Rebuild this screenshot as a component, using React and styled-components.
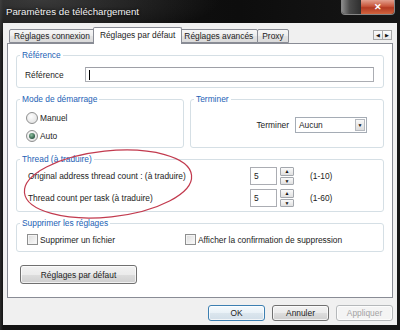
import React from 'react'
import styled, { createGlobalStyle } from 'styled-components'

const GlobalStyle = createGlobalStyle`
  html, body {
    margin: 0;
    padding: 0;
    background: #fff;
  }
  body {
    font-family: "Liberation Sans", Arial, sans-serif;
    font-size: 8.4px;
    color: #1c1c1c;
  }
`;

const Window = styled.div`
  position: relative;
  width: 400px;
  height: 330px;
  display: flex;
  flex-direction: column;
  overflow: hidden;
  background:
    radial-gradient(ellipse 180px 40px at 40px 0, rgba(90,90,90,.55), rgba(0,0,0,0)),
    linear-gradient(90deg, #2a2a2a 0, #131313 3px, #0d0d0d 60%, #161616 100%);
`;

const TitleBar = styled.div`
  height: 23px;
  flex-shrink: 0;
  display: flex;
  align-items: flex-start;
  padding: 0 5px 0 6px;
`;

const Title = styled.div`
  color: #f2f2f2;
  font-size: 9.7px;
  line-height: 24px;
  text-shadow: 0 0 3px #000;
`;

const Caption = styled.div`
  margin-left: auto;
  display: flex;
  height: 14px;
  border: 1px solid rgba(230,230,230,.55);
  border-top: none;
  border-radius: 0 0 4px 4px;
  overflow: hidden;
`;

const CaptionPart = styled.div`
  width: ${p => p.$w}px;
  height: 100%;
  display: flex;
  align-items: center;
  justify-content: center;
  color: #fff;
  font-size: 9px;
  font-weight: bold;
  background: ${p => p.$red
    ? 'linear-gradient(#e2a08e 0%, #c8553a 45%, #b23a22 55%, #d2643e 100%)'
    : 'linear-gradient(90deg, #8a8a8a 0%, #4a4a4a 40%, #2e2e2e 100%)'};
`;

const Client = styled.div`
  flex: 1;
  margin: 0 3px 5px 3px;
  padding: 0 4px 4px 4px;
  display: flex;
  flex-direction: column;
  background: #f0f0f0;
`;

const TabStrip = styled.div`
  height: 16px;
  margin-top: 4px;
  padding-left: 3px;
  display: flex;
  align-items: flex-end;
`;

const Tab = styled.div`
  position: relative;
  z-index: ${p => (p.$active ? 2 : 1)};
  height: ${p => (p.$active ? 17 : 14)}px;
  margin: 0 ${p => (p.$active ? -2 : 0)}px ${p => (p.$active ? -1 : 0)}px;
  margin-left: ${p => (p.$active ? -2 : -1)}px;
  padding: 0 ${p => (p.$active ? 6 : 4)}px;
  box-sizing: border-box;
  border: 1px solid #898c95;
  border-bottom: ${p => (p.$active ? 'none' : '1px solid #898c95')};
  border-radius: 2px 2px 0 0;
  background: ${p => (p.$active
    ? '#fff'
    : 'linear-gradient(#f6f6f6 0%, #eeeeee 45%, #e2e2e2 55%, #dadada 100%)')};
  line-height: ${p => (p.$active ? 14 : 13)}px;
  white-space: nowrap;
  color: #1c1c1c;
`;

const TabScroll = styled.div`
  margin-left: auto;
  margin-bottom: 3px;
  margin-right: 1px;
  display: flex;
`;

const ScrollBtn = styled.div`
  width: 10px;
  height: 10px;
  box-sizing: border-box;
  border: 1px solid #a8a8a8;
  margin-left: -1px;
  background: linear-gradient(#fbfbfb, #e8e8e8);
  display: flex;
  align-items: center;
  justify-content: center;
  font-size: 5px;
  color: #111;
`;

const Panel = styled.div`
  flex: 1;
  display: flex;
  flex-direction: column;
  padding: 6px 8px 0 8px;
  border: 1px solid #898c95;
  background: #fff;
`;

const Group = styled.fieldset`
  margin: 0;
  padding: 0;
  min-width: 0;
  border: 1px solid #d5dfe5;
  border-radius: 3px;
  margin-top: ${p => p.$top || 0}px;
  flex: ${p => (p.$grow ? 1 : 'none')};
  width: ${p => (p.$w ? `${p.$w}px` : 'auto')};
  box-sizing: border-box;
  display: flex;
  flex-direction: column;
`;

const Legend = styled.legend`
  margin-left: 3px;
  padding: 0 2px;
  color: #2362b5;
  font-size: 8.4px;
  line-height: 10px;
`;

const GroupBody = styled.div`
  flex: 1;
  display: flex;
  flex-direction: ${p => p.$dir || 'row'};
  align-items: ${p => p.$align || 'center'};
  justify-content: ${p => p.$justify || 'flex-start'};
  gap: ${p => p.$gap || 0}px;
  padding: ${p => p.$pad};
`;

const GroupRow = styled.div`
  display: flex;
  gap: 6px;
  margin-top: 6px;
`;

const Label = styled.span`
  width: ${p => (p.$w ? `${p.$w}px` : 'auto')};
  flex-shrink: 0;
  white-space: nowrap;
  line-height: 12px;
`;

const TextInput = styled.div`
  flex: 1;
  height: 15px;
  box-sizing: border-box;
  border: 1px solid #abadb3;
  border-top-color: #9ea0a7;
  display: flex;
  align-items: center;
  padding-left: 3px;
`;

const Caret = styled.span`
  width: 1px;
  height: 10px;
  background: #000;
`;

const Option = styled.label`
  display: flex;
  align-items: center;
  gap: 2px;
  height: ${p => p.$h || 14}px;
  white-space: nowrap;
`;

const Radio = styled.span`
  width: 12px;
  height: 12px;
  box-sizing: border-box;
  border-radius: 50%;
  border: 1px solid #8e8f8f;
  background: radial-gradient(circle at 40% 35%, #fdfdfd, #dcdcdc);
  display: flex;
  align-items: center;
  justify-content: center;
  &::after {
    content: '';
    width: 6px;
    height: 6px;
    border-radius: 50%;
    display: ${p => (p.$checked ? 'block' : 'none')};
    background: radial-gradient(circle at 40% 35%, #8fc0a0, #2c5a44 70%);
  }
`;

const Check = styled.span`
  width: 11px;
  height: 11px;
  box-sizing: border-box;
  border: 1px solid #8e8f8f;
  background: linear-gradient(135deg, #dcdcdc, #fbfbfb);
  box-shadow: inset 0 0 0 1px #f4f4f4;
`;

const Select = styled.div`
  width: 72px;
  height: 16px;
  box-sizing: border-box;
  border: 1px solid #a5acb5;
  background: #fff;
  display: flex;
  align-items: center;
  padding: 0 1px 0 3px;
`;

const SelectText = styled.span`
  flex: 1;
`;

const DropBtn = styled.span`
  width: 10px;
  height: 12px;
  box-sizing: border-box;
  border: 1px solid #b5b9bf;
  background: linear-gradient(#f8f8f8, #dcdcdc);
  display: flex;
  align-items: center;
  justify-content: center;
  font-size: 5px;
  color: #111;
`;

const ThreadRow = styled.div`
  display: flex;
  align-items: center;
  height: 18px;
`;

const SpinBox = styled.div`
  display: flex;
  gap: 3px;
  height: 18px;
`;

const SpinInput = styled.div`
  width: 27px;
  box-sizing: border-box;
  border: 1px solid #abadb3;
  padding-left: 3px;
  line-height: 16px;
`;

const SpinButtons = styled.div`
  width: 14px;
  display: flex;
  flex-direction: column;
  gap: 1px;
`;

const SpinBtn = styled.div`
  flex: 1;
  box-sizing: border-box;
  border: 1px solid #a3a7ad;
  border-radius: 1px;
  background: linear-gradient(#fafafa, #e0e0e0);
  display: flex;
  align-items: center;
  justify-content: center;
  font-size: 5px;
  color: #111;
`;

const Range = styled.span`
  margin-left: 16px;
`;

const Button = styled.div`
  width: ${p => p.$w}px;
  height: ${p => p.$h || 16}px;
  box-sizing: border-box;
  border: 1px solid ${p => (p.$default ? '#3c7fb1' : p.$disabled ? '#b5b8ba' : '#707070')};
  border-radius: 3px;
  background: ${p => (p.$disabled
    ? '#f4f4f4'
    : p.$default
      ? 'linear-gradient(#f5fafd 0%, #e9f1f7 50%, #dbe6ee 51%, #d2dee8 100%)'
      : 'linear-gradient(#f2f2f2 0%, #ebebeb 50%, #dddddd 51%, #cfcfcf 100%)')};
  box-shadow: inset 0 0 0 1px rgba(255,255,255,.7);
  color: ${p => (p.$disabled ? '#a3a3a3' : '#1c1c1c')};
  display: flex;
  align-items: center;
  justify-content: center;
  white-space: nowrap;
`;

const DefaultsButton = styled(Button)`
  margin: 13px 0 0 4px;
`;

const Footer = styled.div`
  display: flex;
  justify-content: flex-end;
  gap: 7px;
  margin-top: 7px;
`;

const Annotation = styled.svg`
  position: absolute;
  left: 0;
  top: 0;
  pointer-events: none;
`;

const App = () => {
  return (
    <Window>
      <GlobalStyle />
      <TitleBar>
        <Title>Paramètres de téléchargement</Title>
        <Caption>
          <CaptionPart $w={19} />
          <CaptionPart $w={33} $red>✕</CaptionPart>
        </Caption>
      </TitleBar>

      <Client>
        <TabStrip>
          <Tab>Réglages connexion</Tab>
          <Tab $active>Réglages par défaut</Tab>
          <Tab>Réglages avancés</Tab>
          <Tab>Proxy</Tab>
          <TabScroll>
            <ScrollBtn>◀</ScrollBtn>
            <ScrollBtn>▶</ScrollBtn>
          </TabScroll>
        </TabStrip>

        <Panel>
          <Group>
            <Legend>Référence</Legend>
            <GroupBody $pad="7px 9px 5px 8px">
              <Label $w={60}>Référence</Label>
              <TextInput><Caret /></TextInput>
            </GroupBody>
          </Group>

          <GroupRow>
            <Group $w={168}>
              <Legend>Mode de démarrage</Legend>
              <GroupBody $dir="column" $align="flex-start" $gap={4} $pad="7px 0 4px 9px">
                <Option><Radio />Manuel</Option>
                <Option><Radio $checked />Auto</Option>
              </GroupBody>
            </Group>
            <Group $grow>
              <Legend>Terminer</Legend>
              <GroupBody $justify="flex-end" $gap={6} $pad="0 16px 1px 0">
                <Label>Terminer</Label>
                <Select>
                  <SelectText>Aucun</SelectText>
                  <DropBtn>▼</DropBtn>
                </Select>
              </GroupBody>
            </Group>
          </GroupRow>

          <Group $top={6}>
            <Legend>Thread (à traduire)</Legend>
            <GroupBody $dir="column" $align="stretch" $gap={4} $pad="3px 0 4px 11px">
              <ThreadRow>
                <Label $w={222}>Original address thread count : (à traduire)</Label>
                <SpinBox>
                  <SpinInput>5</SpinInput>
                  <SpinButtons>
                    <SpinBtn>▲</SpinBtn>
                    <SpinBtn>▼</SpinBtn>
                  </SpinButtons>
                </SpinBox>
                <Range>(1-10)</Range>
              </ThreadRow>
              <ThreadRow>
                <Label $w={222}>Thread count per task (à traduire)</Label>
                <SpinBox>
                  <SpinInput>5</SpinInput>
                  <SpinButtons>
                    <SpinBtn>▲</SpinBtn>
                    <SpinBtn>▼</SpinBtn>
                  </SpinButtons>
                </SpinBox>
                <Range>(1-60)</Range>
              </ThreadRow>
            </GroupBody>
          </Group>

          <Group $top={6}>
            <Legend>Supprimer les réglages</Legend>
            <GroupBody $pad="5px 0 5px 10px">
              <Option $h={13} style={{ width: 158 }}><Check />Supprimer un fichier</Option>
              <Option $h={13}><Check />Afficher la confirmation de suppression</Option>
            </GroupBody>
          </Group>

          <DefaultsButton $w={117} $h={19}>Réglages par défaut</DefaultsButton>
        </Panel>

        <Footer>
          <Button $w={57} $default>OK</Button>
          <Button $w={57}>Annuler</Button>
          <Button $w={57} $disabled>Appliquer</Button>
        </Footer>
      </Client>

      <Annotation width="400" height="330" viewBox="0 0 400 330">
        <ellipse
          cx="108"
          cy="184"
          rx="84"
          ry="33"
          transform="rotate(-6 108 184)"
          fill="none"
          stroke="#c23a4e"
          strokeWidth="1.2"
        />
      </Annotation>
    </Window>
  )
}

export default App
